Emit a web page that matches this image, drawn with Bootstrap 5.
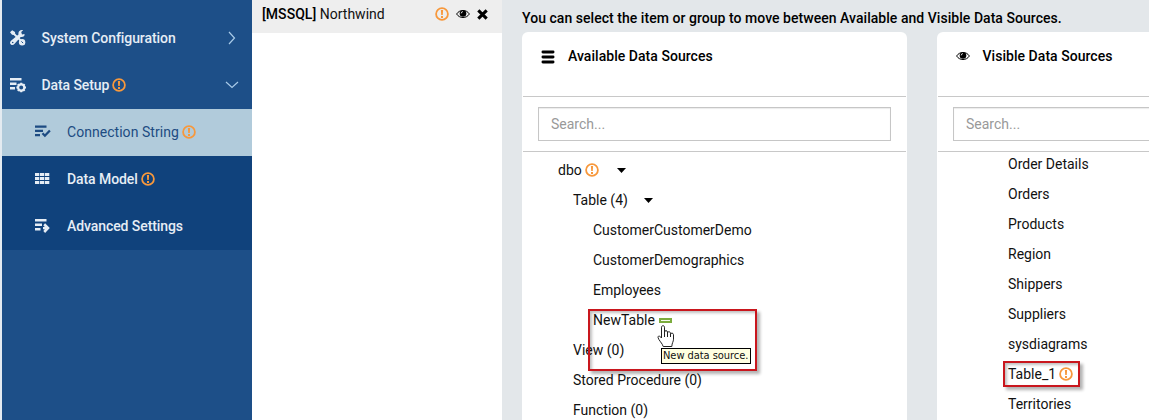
<!DOCTYPE html>
<html lang="en">
<head>
<meta charset="utf-8">
<meta name="viewport" content="width=device-width, initial-scale=1">
<title>Data Setup - Connection String</title>
<link href="https://cdn.jsdelivr.net/npm/bootstrap@5.3.0/dist/css/bootstrap.min.css" rel="stylesheet">
<style>
body{font-family:Roboto,sans-serif;font-size:14px;line-height:20px;color:#111;background:#e3e7ea;height:420px}
.side{width:252px;background:#1d4f88;border-left:2px solid #e4ebf1;padding-top:15px}
.side .nav-link{height:47px;padding:0 13px 2px 7px;color:#e6edf5;font-weight:500;letter-spacing:-.08px}
.side .nav-link .lead-icon{width:18px;height:18px;margin-right:15px;margin-left:-.5px}
.side .submenu{background:#10427c}
.side .submenu .nav-link{padding-left:32.500px}
.side .nav-link.active{background:#b1cbdb;color:#1d4b82;font-weight:400;letter-spacing:.04px}
.warn{width:14px;height:14px;color:#f7983c;margin-left:3px}
.conn{width:250px}
.conn-head{height:33px;background:#eee;padding:0 13px 4px 10px}
.medium{font-weight:500;letter-spacing:.04px}
.sources{padding:8px 0 0 20px}
.panel{flex:none;width:385px;height:400px;border:0;border-radius:6px 6px 0 0;overflow:hidden}
.panel-title{height:65px;padding:14px 18px;border-bottom:1px solid #c8c8c8;margin:0 1px}
.panel-search{height:55px;padding:10px 15px 0;border-bottom:1px solid #c8c8c8;margin:0 1px}
.panel-search .form-control{height:34px;border-radius:0;border-color:#c6c6c6;font-size:14px;padding:6px 12px;box-shadow:inset 0 1px 1px rgba(0,0,0,.08)}
.form-control::placeholder{color:#999}
.tree li{height:30px;display:flex;align-items:center;white-space:nowrap}
.tree .l1{padding-left:36px}.tree .l2{padding-left:51px}.tree .l3{padding-left:71px}
.mark-box{border:2px solid #c9161d;box-shadow:3px 3px 3px rgba(0,0,0,.3),inset 2px 2px 3px rgba(0,0,0,.25)}
.tip{font-family:"DejaVu Sans Condensed","DejaVu Sans",sans-serif;font-size:11px;letter-spacing:-.05px;line-height:14px;background:#ffffe1;border:1px solid #000;color:#111}
</style>
</head>
<body class="d-flex overflow-hidden">
<svg class="d-none">
  <symbol id="warn" viewBox="0 0 14 14"><circle cx="7" cy="7" r="5.900" fill="none" stroke="currentColor" stroke-width="1.800"/><path d="M5.900 3h2.200l-.3 5H6.200zM6 9h2v1.900H6z" fill="currentColor"/></symbol>
  <symbol id="eye" viewBox="0 0 14 10"><path d="M.6 5C3.500.3 10.500.3 13.400 5 10.500 9.700 3.500 9.700.6 5z" fill="none" stroke="currentColor" stroke-width="1"/><circle cx="7" cy="4.500" r="3.300" fill="currentColor"/><path d="M5.200 4.400A1.800 1.800 0 0 1 7 2.600" fill="none" stroke="#fff" stroke-width=".8"/></symbol>
</svg>

<aside class="side flex-shrink-0">
  <nav class="nav flex-column flex-nowrap">
    <a class="nav-link d-flex align-items-center" href="#">
      <svg class="lead-icon" viewBox="0 0 18 18" fill="currentColor"><path d="M1 3.300 3.200 1.200 6 3.100 6.200 4.700 13.600 12l1.200.2 1.300 2.300-1.300 1.400-2.500-1.300-.2-1.400L4.700 5.900 3 5.700z"/><path d="M15.500 4.900 13 5.400l-.8-2.300 1.900-1.800c-2.400-.7-4.700.7-4.700 3.100l.1 1.100L2 11.700c-1.300 1.300-1.200 2.800-.1 3.700 1 1 2.600.8 3.500-.3l6.300-7.200c2.400.4 4.300-.9 3.800-3z"/><circle cx="13.100" cy="13.200" r="3.200"/><circle cx="3.700" cy="13.500" r=".8" fill="#1d4f88"/><path d="m12.400 12.400 1.700 1.700" stroke="#1d4f88"/></svg>
      <span>System Configuration</span>
      <svg class="ms-auto" style="margin-right:3px" width="8" height="14" viewBox="0 0 8 14" fill="none" stroke="#a9cbe8" stroke-width="1.200"><path d="m1 1 5.500 6L1 13"/></svg>
    </a>
    <a class="nav-link d-flex align-items-center" href="#">
      <svg class="lead-icon" viewBox="0 0 18 18" fill="currentColor"><path d="M1 2h11.500v2.500H1zM1 6.500h6.500V9H1zM1 11h5v2.500H1z"/><circle cx="12.200" cy="11.500" r="3.100" fill="none" stroke="currentColor" stroke-width="2.200"/><path d="M12.200 6.700v2M12.200 14.300v2M7.400 11.500h2M15 11.500h2M8.800 8.100l1.400 1.400M14.200 13.500l1.400 1.400M15.600 8.100l-1.400 1.400M10.200 13.500l-1.400 1.400" stroke="currentColor" stroke-width="2"/></svg>
      <span>Data Setup</span><svg class="warn"><use href="#warn"/></svg>
      <svg class="ms-auto" width="14" height="8" viewBox="0 0 14 8" fill="none" stroke="#a9cbe8" stroke-width="1.200"><path d="m1 1 6 5.500L13 1"/></svg>
    </a>
    <div class="submenu">
      <a class="nav-link active d-flex align-items-center" href="#">
        <svg class="lead-icon" viewBox="0 0 18 18" fill="currentColor"><path d="M1 2.500h11.500v2.200H1zM1 6.700h8v2.200H1zM1 11h5v2.200H1z"/><path d="m8.500 10.300 2.400 2.400 5-5.200" fill="none" stroke="currentColor" stroke-width="2.300"/></svg>
        <span>Connection String</span><svg class="warn"><use href="#warn"/></svg>
      </a>
      <a class="nav-link d-flex align-items-center" href="#">
        <svg class="lead-icon" viewBox="0 0 18 18" fill="currentColor"><path d="M1 3h4.300v3.100H1zM6 3h4.300v3.100H6zM11 3h4.300v3.100H11zM1 7h4.300v3.100H1zM6 7h4.300v3.100H6zM11 7h4.300v3.100H11zM1 11h4.300v3.100H1zM6 11h4.300v3.100H6zM11 11h4.300v3.100H11z"/></svg>
        <span>Data Model</span><svg class="warn"><use href="#warn"/></svg>
      </a>
      <a class="nav-link d-flex align-items-center" href="#">
        <svg class="lead-icon" viewBox="0 0 18 18" fill="currentColor"><path d="M1 2h11.500v2.400H1zM1 6.500h7v2.400H1zM1 11h5.500v2.400H1z"/><path d="m9.300 8.200 1.800-1.900 4.700 4.800-4.700 4.800-1.800-1.900 1.500-1.700H9V9.900h1.800z"/></svg>
        <span>Advanced Settings</span>
      </a>
    </div>
  </nav>
</aside>

<section class="conn bg-white flex-shrink-0">
  <div class="conn-head d-flex align-items-center">
    <span style="margin-top:-1px"><span class="medium text-black">[MSSQL]</span> Northwind</span>
    <svg class="warn ms-auto" style="margin-top:-1px"><use href="#warn"/></svg>
    <svg width="14" height="10" class="text-black" style="margin:-1px 0 0 7px"><use href="#eye"/></svg>
    <svg width="11" height="11" viewBox="0 0 10 10" style="margin:-1px 1px 0 7px"><path d="m1.200 1.200 7.600 7.600M8.800 1.200 1.200 8.800" stroke="#000" stroke-width="2.800"/></svg>
  </div>
</section>

<main class="sources flex-grow-1 overflow-hidden">
  <div class="medium text-black mb-1">You can select the item or group to move between Available and Visible Data Sources.</div>
  <div class="d-flex" style="gap:30px">
    <section class="card panel">
      <div class="panel-title medium text-black d-flex align-items-start">
        <svg width="14" height="14" viewBox="0 0 14 14" style="margin:3.500px 13px 0 0"><path d="M1.900 2h10.200M1.900 7h10.200M1.900 12h10.200" stroke="#000" stroke-width="2.800" stroke-linecap="round"/></svg>
        <span>Available Data Sources</span>
      </div>
      <div class="panel-search"><input class="form-control" placeholder="Search..."></div>
      <ul class="tree list-unstyled mb-0" style="padding-top:3px">
        <li class="l1">dbo<svg class="warn"><use href="#warn"/></svg><svg width="9" height="5" style="margin-left:18.500px"><path d="M0 0h9L4.500 5z"/></svg></li>
        <li class="l2">Table (4)<svg width="9" height="5" style="margin-left:16px"><path d="M0 0h9L4.500 5z"/></svg></li>
        <li class="l3">CustomerCustomerDemo</li>
        <li class="l3">CustomerDemographics</li>
        <li class="l3">Employees</li>
        <li class="l3">NewTable<svg width="13" height="5" class="ms-1"><path d="M1 1h11v3H1z" fill="#f4faec" stroke="#7cac3e" stroke-width="2"/></svg></li>
        <li class="l2">View (0)</li>
        <li class="l2">Stored Procedure (0)</li>
        <li class="l2">Function (0)</li>
      </ul>
    </section>
    <section class="card panel">
      <div class="panel-title medium text-black d-flex align-items-start">
        <svg width="14" height="10" style="margin:5px 12.500px 0 0"><use href="#eye"/></svg>
        <span>Visible Data Sources</span>
      </div>
      <div class="panel-search"><input class="form-control" placeholder="Search..."></div>
      <ul class="tree list-unstyled mb-0" style="margin-top:-3px">
        <li class="l3">Order Details</li>
        <li class="l3">Orders</li>
        <li class="l3">Products</li>
        <li class="l3">Region</li>
        <li class="l3">Shippers</li>
        <li class="l3">Suppliers</li>
        <li class="l3">sysdiagrams</li>
        <li class="l3">Table_1<svg class="warn"><use href="#warn"/></svg></li>
        <li class="l3">Territories</li>
      </ul>
    </section>
  </div>
</main>

<!-- callouts, pointer and tooltip lying over the page -->
<div class="mark-box position-absolute" style="left:588px;top:309px;width:169px;height:62px"></div>
<div class="mark-box position-absolute" style="left:1003px;top:361px;width:77px;height:26px"></div>
<svg class="position-absolute" style="left:657px;top:325px" width="18" height="23" viewBox="0 0 18 23"><path d="M4.500 12V2.200C4.500.2 7.500.2 7.500 2.200V7c0-1.800 3-1.800 3 0v1c0-1.800 3-1.600 3 .2v1c.3-1.700 3-1.300 3 .5v4.500c0 2.500-1.500 3.500-1.700 7.300H6.200C5.900 19 1 14.500 1 12.300c0-1.800 2-1.600 3.500.7z" fill="#fff" stroke="#222"/><path d="M7.500 7v5M10.500 8v4M13.500 9v3" stroke="#222"/></svg>
<div class="tip position-absolute text-nowrap" style="left:661px;top:348px;width:90px;height:16px;padding-left:1px">New data source.</div>
<script src="https://cdn.jsdelivr.net/npm/bootstrap@5.3.0/dist/js/bootstrap.bundle.min.js"></script>
</body>
</html>
